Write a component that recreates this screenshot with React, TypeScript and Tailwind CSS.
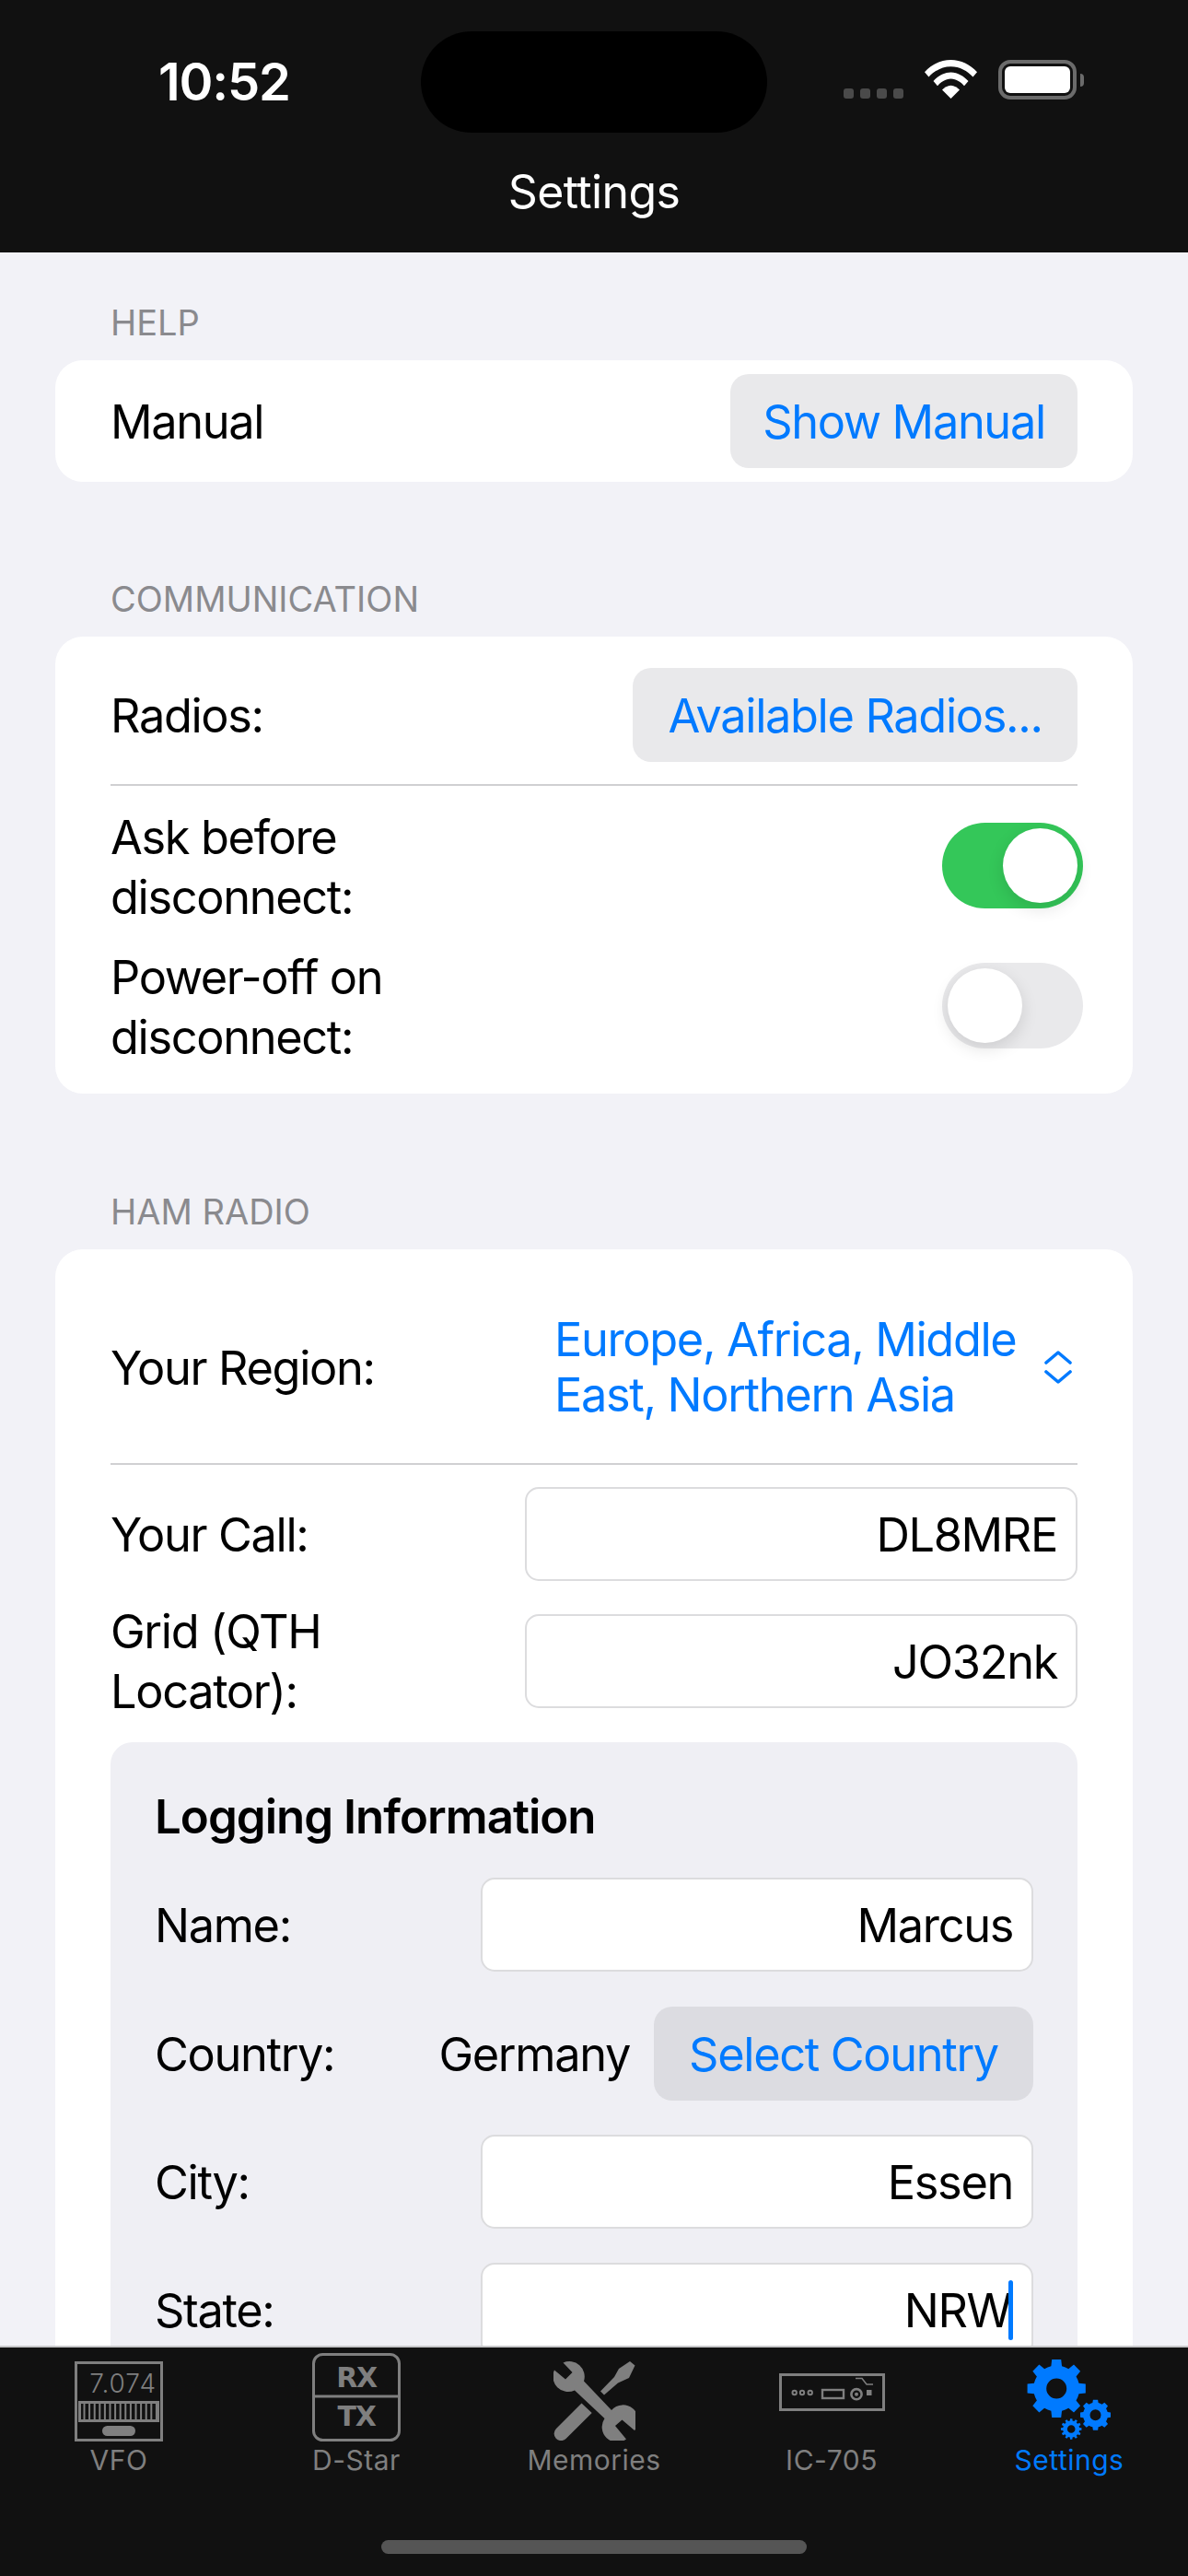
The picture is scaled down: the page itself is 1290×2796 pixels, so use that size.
import type { ReactNode } from 'react';

const font = 'font-["Inter","Noto_Sans",sans-serif]';

function gearPath(cx: number, cy: number, outer: number, root: number, hole: number, teeth: number) {
  const pts: string[] = [];
  const step = (Math.PI * 2) / teeth;
  for (let i = 0; i < teeth; i++) {
    const a = i * step - Math.PI / 2;
    const offs: [number, number][] = [
      [-0.5, root],
      [-0.3, root],
      [-0.2, outer],
      [0.2, outer],
      [0.3, root],
    ];
    for (const [o, r] of offs) {
      const t = a + o * step;
      pts.push(`${(cx + r * Math.cos(t)).toFixed(2)} ${(cy + r * Math.sin(t)).toFixed(2)}`);
    }
  }
  return `M${pts.join('L')}Z M${cx - hole} ${cy}a${hole} ${hole} 0 1 0 ${hole * 2} 0a${hole} ${hole} 0 1 0 ${-hole * 2} 0Z`;
}

function VfoIcon() {
  const ticks = [0, 1, 2, 3, 4, 5, 6, 7, 8, 9, 10, 11, 12, 13, 14];
  return (
    <svg width="96" height="87" viewBox="0 0 96 87" className="text-[#7f7f7f]">
      <rect x="1.5" y="1.5" width="93" height="84" fill="none" stroke="currentColor" strokeWidth="3" />
      <text x="89" y="34" textAnchor="end" fill="currentColor" fontFamily="Inter, sans-serif" fontSize="28" fontWeight="300" letterSpacing="1">7.074</text>
      <rect x="5.5" y="44.5" width="85" height="20" fill="none" stroke="currentColor" strokeWidth="3" />
      {ticks.map((i) => (
        <rect key={i} x={9.5 + i * 5.6} y="45" width="2" height="19" fill="currentColor" />
      ))}
      <rect x="30" y="70" width="36" height="11" rx="5.5" fill="currentColor" />
    </svg>
  );
}

function DStarIcon() {
  return (
    <svg width="96" height="96" viewBox="0 0 96 96" className="text-[#7f7f7f]">
      <rect x="1.5" y="1.5" width="93" height="93" rx="10" fill="none" stroke="currentColor" strokeWidth="3" />
      <line x1="2" y1="47" x2="94" y2="47" stroke="currentColor" strokeWidth="3" />
      <text x="48" y="37" textAnchor="middle" fill="currentColor" fontFamily="'DejaVu Sans', sans-serif" fontSize="30" fontWeight="700">RX</text>
      <text x="48" y="79" textAnchor="middle" fill="currentColor" fontFamily="'DejaVu Sans', sans-serif" fontSize="30" fontWeight="700">TX</text>
    </svg>
  );
}

function ToolsIcon() {
  return (
    <svg width="89" height="87" viewBox="9 9 89 87" className="text-[#7f7f7f]">
      {/* wrench */}
      <path
        fill="currentColor"
        d="M19.5 11.5 29.5 22 22 29.5 10 19.5A16.5 16.5 0 0 0 32 41.5L64.5 72A16.5 16.5 0 0 0 88 94.5L76 80 83.5 73.5 97 85A16.5 16.5 0 0 0 72 63L42 31.5A16.5 16.5 0 0 0 19.5 11.5Z"
      />
      {/* screwdriver, tip half */}
      <path fill="currentColor" d="M60 42.5 75 27 80 18 92 10 97.5 14.5 91 28 79 33.5 64 46.5Z" />
      {/* screwdriver, handle half */}
      <path fill="currentColor" d="M39.5 55.5 12 83A7.6 7.6 0 0 0 22.5 94L50.7 66Z" />
    </svg>
  );
}

function RadioIcon() {
  return (
    <svg width="115" height="41" viewBox="0 0 115 41" className="text-[#7f7f7f]">
      <rect x="1.5" y="1.5" width="112" height="38" fill="none" stroke="currentColor" strokeWidth="3" />
      <path d="M83 5.5h7l5 6.5h7" fill="none" stroke="currentColor" strokeWidth="1.5" />
      <g fill="none" stroke="currentColor" strokeWidth="2">
        <circle cx="16.7" cy="21" r="2.2" />
        <circle cx="25" cy="21" r="2.2" />
        <circle cx="33.7" cy="21" r="2.2" />
        <rect x="47" y="18" width="23" height="9" strokeWidth="2.4" />
        <circle cx="84" cy="22.7" r="5.6" strokeWidth="2.6" />
      </g>
      <circle cx="84" cy="22.7" r="2" fill="currentColor" />
      <rect x="95" y="18" width="5.5" height="6" fill="currentColor" />
    </svg>
  );
}

function GearsIcon() {
  return (
    <svg width="92" height="91" viewBox="9.5 9.5 92 91" className="text-[#007aff]">
      <path fillRule="evenodd" fill="currentColor" d={gearPath(41.7, 44, 32, 25, 11, 8)} />
      <path fillRule="evenodd" fill="currentColor" d={gearPath(84, 72.7, 16.7, 13.5, 6, 8)} />
      <path fillRule="evenodd" fill="currentColor" d={gearPath(57.7, 88, 11.3, 9, 4.3, 12)} />
    </svg>
  );
}

function Toggle({ on }: { on: boolean }) {
  return (
    <div className={`flex h-[93px] w-[153px] shrink-0 items-center rounded-full p-[6px] ${on ? 'justify-end bg-[#34c759]' : 'justify-start bg-[#e9e9eb]'}`}>
      <div className="h-[81px] w-[81px] rounded-full bg-white shadow-[0_6px_18px_rgba(0,0,0,0.12)]" />
    </div>
  );
}

function GrayButton({ children, dark, className }: { children: ReactNode; dark?: boolean; className: string }) {
  return (
    <div className={`flex h-[102px] shrink-0 items-center justify-center rounded-[20px] text-[#007aff] ${dark ? 'bg-[#dcdce1]' : 'bg-[#e9e9eb]'} ${className}`}>
      {children}
    </div>
  );
}

function Field({ value, cursor }: { value: string; cursor?: boolean }) {
  return (
    <div className="flex h-[102px] w-[600px] shrink-0 items-center justify-end rounded-[15px] border-2 border-[#dcdcde] bg-white px-[20px]">
      <span>{value}</span>
      {cursor && <span className="-ml-[3px] h-[65px] w-[5px] rounded-full bg-[#007aff]" />}
    </div>
  );
}

function SectionLabel({ children }: { children: ReactNode }) {
  return <div className="mb-[17px] pl-[120px] text-[38px] leading-[48px] tracking-normal text-[#8a8a8e]">{children}</div>;
}

function Tab({ icon, label, active }: { icon: ReactNode; label: string; active?: boolean }) {
  return (
    <div className="flex h-[140px] w-[258px] flex-col items-center">
      <div className="flex h-[104px] items-end">{icon}</div>
      <div className={`mt-[2px] text-[30px] leading-[36px] tracking-[0.5px] ${active ? 'text-[#007aff]' : 'text-[#7f7f7f]'}`}>{label}</div>
    </div>
  );
}

export default function App() {
  return (
    <div className={`flex h-[2796px] w-[1290px] flex-col overflow-hidden bg-[#f2f2f7] text-[50.5px] leading-[65px] tracking-[-1.35px] text-black ${font}`}>
      {/* status + nav */}
      <header className="h-[274px] shrink-0 bg-[#111111] text-white">
        <div className="flex h-[178px] items-start">
          <div className="w-[457px] pl-[172px] pt-[57px] text-[56px] font-semibold leading-[64px] tracking-[-1.2px]">10:52</div>
          <div className="mt-[34px] h-[110px] w-[376px] rounded-full bg-black" />
          <div className="mt-[65px] flex h-[43px] items-end pl-[83px]">
            <div className="mb-px flex gap-[7px]">
              {[0, 1, 2, 3].map((i) => (
                <span key={i} className="h-[11px] w-[11px] rounded-[3px] bg-[#4a4a4a]" />
              ))}
            </div>
            <svg width="57" height="42" viewBox="0 0 57 42" fill="white" className="ml-[23px] mb-px">
              <path d="M0 13.3C7.5 5 17.5 0 28.5 0S49.5 5 57 13.3L52.5 18.5C46.5 12 38 7.2 28.5 7.2S10.5 12 4.5 18.5Z" />
              <path d="M9.5 23C14 18 21 13.5 28.5 13.5S43 18 47.5 23L43 28.2C39.5 24.5 34.5 20.6 28.5 20.6S17.5 24.5 14 28.2Z" />
              <path d="M19 32.5C21.5 30 25 27.8 28.5 27.8S35.5 30 38 32.5L28.5 42Z" />
            </svg>
            <div className="ml-[23px] flex items-center">
              <div className="h-[43px] w-[85px] rounded-[13px] border-[4px] border-[#6b6b6b] p-[3px]">
                <div className="h-full w-full rounded-[6px] bg-white" />
              </div>
              <span className="ml-[4px] h-[14px] w-[4px] rounded-r-full bg-[#6b6b6b]" />
            </div>
          </div>
        </div>
        <div className="text-center text-[50px] leading-[60px] tracking-[-0.6px]">Settings</div>
      </header>

      <main className="flex-1 overflow-hidden pt-[52px]">
        <SectionLabel>HELP</SectionLabel>
        <section className="mx-[60px] flex h-[132px] items-center justify-between rounded-[30px] bg-white px-[60px]">
          <span>Manual</span>
          <GrayButton className="w-[377px]">Show Manual</GrayButton>
        </section>

        <div className="mt-[103px]">
          <SectionLabel>COMMUNICATION</SectionLabel>
        </div>
        <section className="mx-[60px] h-[496px] rounded-[30px] bg-white px-[60px] pt-[34px]">
          <div className="flex items-center justify-between pb-[24px]">
            <span>Radios:</span>
            <GrayButton className="w-[483px]">Available Radios...</GrayButton>
          </div>
          <div className="h-[2px] bg-[#d0d0d2]" />
          <div className="mt-[27px] flex h-[118px] items-center justify-between">
            <span className="w-[400px] pt-[3px]">Ask before disconnect:</span>
            <div className="-mr-[6px]"><Toggle on /></div>
          </div>
          <div className="mt-[34px] flex h-[118px] items-center justify-between">
            <span className="w-[400px] pt-[3px]">Power-off on disconnect:</span>
            <div className="-mr-[6px]"><Toggle on={false} /></div>
          </div>
        </section>

        <div className="mt-[104px]">
          <SectionLabel>HAM RADIO</SectionLabel>
        </div>
        <section className="mx-[60px] rounded-t-[30px] bg-white px-[60px] pb-[40px]">
          <div className="flex h-[232px] items-center justify-between pt-[24px]">
            <span>Your Region:</span>
            <div className="flex items-center gap-[21px] pr-[5px] text-[#007aff]">
              <span className="w-[510px] leading-[60px]">Europe, Africa, Middle East, Northern Asia</span>
              <svg width="32" height="36" viewBox="0 0 32 36" fill="none" stroke="currentColor" strokeWidth="3.6" strokeLinecap="round" strokeLinejoin="round">
                <path d="M3 13 16 2l13 11M3 23l13 11 13-11" />
              </svg>
            </div>
          </div>
          <div className="h-[2px] bg-[#d0d0d2]" />
          <div className="mt-[24px] flex items-center justify-between">
            <span>Your Call:</span>
            <Field value="DL8MRE" />
          </div>
          <div className="mt-[36px] flex h-[102px] items-center justify-between">
            <span className="w-[300px]">Grid (QTH Locator):</span>
            <Field value="JO32nk" />
          </div>
          <div className="mt-[37px] rounded-[24px] bg-[#efeff4] pb-[40px] pl-[48px] pr-[48px] pt-[51px]">
            <div className="mb-[36px] text-[51px] font-semibold leading-[60px] tracking-[-1px]">Logging Information</div>
            <div className="flex items-center justify-between">
              <span>Name:</span>
              <Field value="Marcus" />
            </div>
            <div className="mt-[38px] flex items-center justify-between">
              <span>Country:</span>
              <div className="flex items-center gap-[26px]">
                <span>Germany</span>
                <GrayButton dark className="w-[412px]">Select Country</GrayButton>
              </div>
            </div>
            <div className="mt-[37px] flex items-center justify-between">
              <span>City:</span>
              <Field value="Essen" />
            </div>
            <div className="mt-[37px] flex items-center justify-between">
              <span>State:</span>
              <Field value="NRW" cursor />
            </div>
          </div>
        </section>
      </main>

      <footer className="h-[250px] shrink-0 border-t-2 border-[#c6c6c8] bg-[#111111]">
        <nav className="flex h-[140px]">
          <Tab icon={<VfoIcon />} label="VFO" />
          <Tab icon={<DStarIcon />} label="D-Star" />
          <Tab icon={<div className="mb-px"><ToolsIcon /></div>} label="Memories" />
          <Tab icon={<div className="mb-[33px]"><RadioIcon /></div>} label="IC-705" />
          <Tab icon={<div className="mb-px"><GearsIcon /></div>} label="Settings" active />
        </nav>
        <div className="mx-auto mt-[69px] h-[15px] w-[462px] rounded-full bg-[#555555]" />
      </footer>
    </div>
  );
}
